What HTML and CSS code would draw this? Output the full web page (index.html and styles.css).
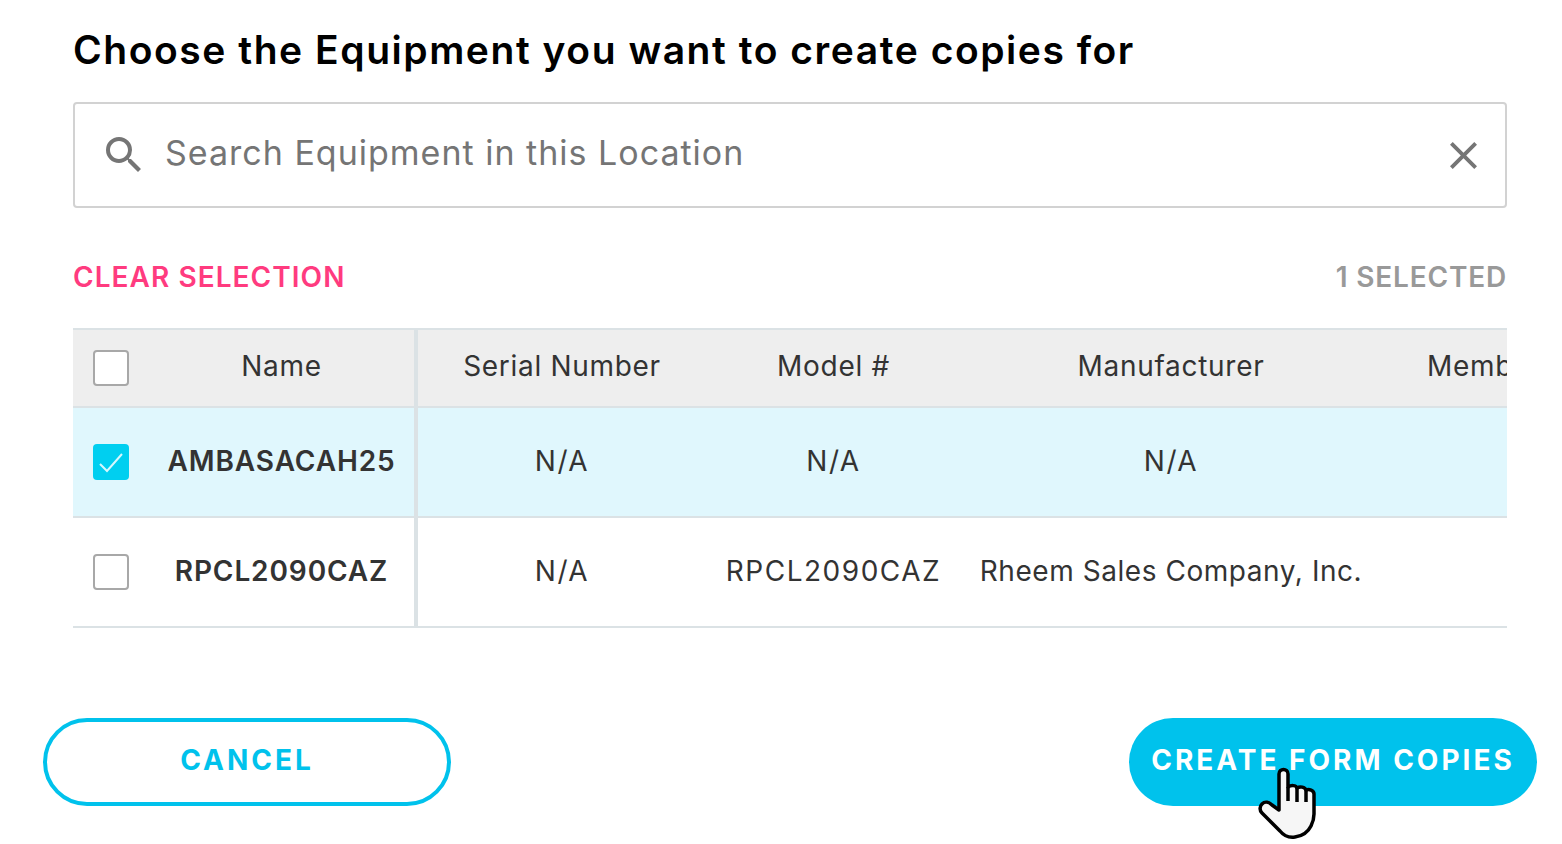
FILE: index.html
```html
<!DOCTYPE html>
<html lang="en">
<head>
    <meta charset="UTF-8">
    <meta name="viewport" content="width=device-width, initial-scale=1.0">
    <title>Create Form Copies</title>
    <link rel="stylesheet" href="styles.css">
</head>
<body>
    <div class="page">
        <h1 class="title">Choose the Equipment you want to create copies for</h1>

        <div class="search">
            <svg class="search-icon" viewBox="3 3 18 18"><path d="M15.5 14h-.79l-.28-.27A6.47 6.47 0 0 0 16 9.5 6.5 6.5 0 1 0 9.5 16c1.61 0 3.09-.59 4.23-1.57l.27.28v.79l5 4.99L20.49 19l-4.99-5zm-6 0C7.01 14 5 11.99 5 9.5S7.01 5 9.5 5 14 7.01 14 9.5 11.99 14 9.5 14z"/></svg>
            <span class="search-text">Search Equipment in this Location</span>
            <svg class="clear-icon" viewBox="5 5 14 14"><path d="M19 6.41 17.59 5 12 10.59 6.41 5 5 6.41 10.59 12 5 17.59 6.41 19 12 13.41 17.59 19 19 17.59 13.41 12z"/></svg>
        </div>

        <div class="selection-bar">
            <span class="clear-link">CLEAR SELECTION</span>
            <span class="selected-count">1 SELECTED</span>
        </div>

        <div class="table-wrap">
            <table class="equipment">
                <colgroup>
                    <col class="col-check">
                    <col class="col-name">
                    <col class="col-serial">
                    <col class="col-model">
                    <col class="col-maker">
                    <col class="col-member">
                </colgroup>
                <thead>
                    <tr>
                        <th class="check-cell"><span class="checkbox"></span></th>
                        <th class="name-cell">Name</th>
                        <th>Serial Number</th>
                        <th>Model #</th>
                        <th>Manufacturer</th>
                        <th class="member-cell">Members</th>
                    </tr>
                </thead>
                <tbody>
                    <tr class="selected">
                        <td class="check-cell">
                            <span class="checkbox checked">
                                <svg viewBox="0 0 36 36"><path d="M7 20l7 7L29 10"/></svg>
                            </span>
                        </td>
                        <td class="name-cell">AMBASACAH25</td>
                        <td class="caps">N/A</td>
                        <td class="caps">N/A</td>
                        <td class="caps">N/A</td>
                        <td></td>
                    </tr>
                    <tr>
                        <td class="check-cell"><span class="checkbox"></span></td>
                        <td class="name-cell">RPCL2090CAZ</td>
                        <td class="caps">N/A</td>
                        <td class="caps">RPCL2090CAZ</td>
                        <td>Rheem Sales Company, Inc.</td>
                        <td></td>
                    </tr>
                </tbody>
            </table>
        </div>

        <div class="actions">
            <button class="btn btn-outline">CANCEL</button>
            <button class="btn btn-solid">CREATE FORM COPIES</button>
        </div>
    </div>

    <svg class="hand" viewBox="0 0 60 74">
        <path d="M21 43V7c0-6 9-6 9 0v13c3-2 8-2 9 1 3-2 8-1 9 2 3-1 8 0 8 4v20c0 5-1 8-3 12-3 6-8 10-16 11-7 1-11-1-15-6L4 46c-3-3-2-7 0-9 3-3 7-2 10 1z"/>
        <path class="hand-line" d="M30 20v14M39 21v14M48 23v12"/>
    </svg>
</body>
</html>
```

FILE: styles.css
```css
* {
    box-sizing: border-box;
}
html, body {
    margin: 0;
    height: 844px;
    overflow: hidden;
    background: white;
}
body {
    font-family: Inter, "Liberation Sans", sans-serif;
    color: #333;
    position: relative;
}
.page {
    padding: 27px 55px 0 73px;
}
.title {
    margin: 0;
    font-size: 39px;
    line-height: 46px;
    font-weight: 600;
    letter-spacing: 1.55px;
    color: #000;
}
.search {
    display: flex;
    align-items: center;
    height: 106px;
    margin-top: 29px;
    padding: 0 28px 0 31px;
    border: 2px solid #d2d2d2;
    border-radius: 4px;
}
.search-icon {
    width: 36px;
    height: 36px;
    fill: #757575;
}
.search-text {
    margin: 0 0 6px 23px;
    font-size: 34px;
    letter-spacing: 1px;
    color: #757575;
}
.clear-icon {
    width: 27px;
    height: 27px;
    margin-left: auto;
    fill: #757575;
}
.selection-bar {
    display: flex;
    justify-content: space-between;
    align-items: center;
    height: 36px;
    margin-top: 51px;
    font-size: 28px;
    font-weight: 600;
}
.clear-link {
    color: #ff3b7f;
    letter-spacing: 1.05px;
}
.selected-count {
    color: #999;
    letter-spacing: 0.8px;
}
.table-wrap {
    margin-top: 33px;
    overflow: hidden;
}
.equipment {
    width: 1620px;
    table-layout: fixed;
    border-collapse: collapse;
    font-size: 28px;
    letter-spacing: 0.55px;
}
.col-check { width: 76px; }
.col-name { width: 267px; }
.col-serial { width: 290px; }
.col-model { width: 255px; }
.col-maker { width: 420px; }
.col-member { width: 312px; }
.equipment th {
    height: 78px;
    padding: 0 0 5px;
    font-weight: 400;
    letter-spacing: 0.7px;
    background: #eee;
    border-top: 2px solid #dbe2e5;
    border-bottom: 2px solid #dbe2e5;
}
.equipment td {
    height: 110px;
    padding: 0 0 3px;
    text-align: center;
    border-bottom: 2px solid #dbe2e5;
}
.equipment .caps {
    letter-spacing: 1.5px;
}
.selected td {
    background: #e0f7fd;
}
.equipment .check-cell {
    padding: 0;
}
.equipment .name-cell {
    border-right: 4px solid #dbe2e5;
}
.equipment td.name-cell {
    font-weight: 600;
    letter-spacing: 0.9px;
}
.equipment .member-cell {
    padding-left: 46px;
    text-align: left;
}
.checkbox {
    display: block;
    width: 36px;
    height: 36px;
    margin-left: 20px;
    background: white;
    border: 2px solid #a8a8a8;
    border-radius: 4px;
}
.checked {
    background: #00cff0;
    border: none;
}
.checked svg {
    display: block;
    fill: none;
    stroke: #d6f7fd;
    stroke-width: 2;
}
.actions {
    display: flex;
    justify-content: space-between;
    margin: 90px -30px 0;
}
.btn {
    width: 408px;
    height: 88px;
    padding: 0 0 5px;
    border-radius: 44px;
    font-family: inherit;
    font-size: 28px;
    font-weight: 700;
    letter-spacing: 3px;
}
.btn-outline {
    background: white;
    color: #00c2ec;
    border: 4px solid #00c2ec;
}
.btn-solid {
    background: #00c2ec;
    color: white;
    border: none;
}
.hand {
    position: absolute;
    left: 1258px;
    top: 767px;
    width: 60px;
    height: 74px;
}
.hand path {
    fill: #f6f6f6;
    stroke: #000;
    stroke-width: 3.5;
    stroke-linejoin: round;
}
.hand .hand-line {
    fill: none;
}
```
